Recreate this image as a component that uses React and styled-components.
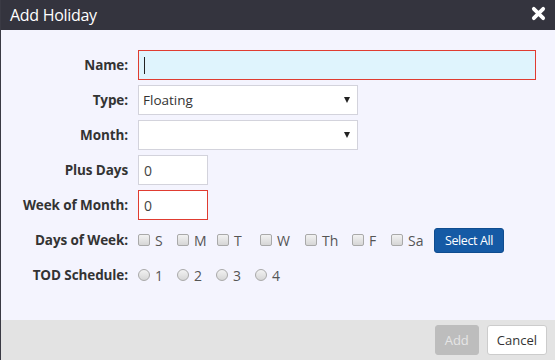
import React from 'react';
import styled, { createGlobalStyle } from 'styled-components';

const GlobalStyle = createGlobalStyle`
  html, body {
    margin: 0;
    padding: 0;
    background: #3a3a44;
  }
  body {
    font-family: "Open Sans", "Noto Sans", sans-serif;
    color: #333;
  }
`;

const days = [
  { label: 'S', width: 39 },
  { label: 'M', width: 40 },
  { label: 'T', width: 43 },
  { label: 'W', width: 45 },
  { label: 'Th', width: 47 },
  { label: 'F', width: 39 },
  { label: 'Sa', width: 43 },
];

const schedules = ['1', '2', '3', '4'];

const App = () => {
  return (
    <>
      <GlobalStyle />
      <Dialog>
        <Header>
          <Title>Add Holiday</Title>
          <CloseIcon viewBox="0 0 16 16">
            <path d="M3 3 L13 13 M13 3 L3 13" stroke="#fff" strokeWidth="4" strokeLinecap="round" />
          </CloseIcon>
        </Header>
        <Body>
          <Row>
            <Label>Name:</Label>
            <TextInput $width={398} $invalid $focused>
              <Caret />
            </TextInput>
          </Row>
          <Row>
            <Label>Type:</Label>
            <Select>
              <span>Floating</span>
              <Arrow />
            </Select>
          </Row>
          <Row>
            <Label>Month:</Label>
            <Select>
              <span />
              <Arrow />
            </Select>
          </Row>
          <Row>
            <Label>Plus Days</Label>
            <TextInput $width={70}>0</TextInput>
          </Row>
          <Row>
            <Label>Week of Month:</Label>
            <TextInput $width={70} $invalid>0</TextInput>
          </Row>
          <Row>
            <Label>Days of Week:</Label>
            <Options>
              {days.map((d) => (
                <Option key={d.label} $width={d.width}>
                  <Checkbox />
                  {d.label}
                </Option>
              ))}
              <PrimaryButton>Select All</PrimaryButton>
            </Options>
          </Row>
          <Row>
            <Label>TOD Schedule:</Label>
            <Options>
              {schedules.map((s) => (
                <Option key={s} $width={39}>
                  <Radio />
                  {s}
                </Option>
              ))}
            </Options>
          </Row>
        </Body>
        <Footer>
          <Button $disabled>Add</Button>
          <Button>Cancel</Button>
        </Footer>
      </Dialog>
    </>
  );
};

const Dialog = styled.div`
  margin-left: 1px;
  width: 554px;
  height: 360px;
  display: flex;
  flex-direction: column;
  background: #f4f4fe;
`;

const Header = styled.div`
  height: 30px;
  flex: none;
  display: flex;
  align-items: center;
  justify-content: space-between;
  padding: 0 9px 0 9px;
  background: #34343e;
`;

const Title = styled.div`
  color: #fff;
  font-family: "Open Sans", sans-serif;
  font-size: 16px;
  letter-spacing: -0.3px;
  margin-top: -1px;
`;

const CloseIcon = styled.svg`
  width: 15px;
  height: 15px;
  margin-top: -3px;
`;

const Body = styled.div`
  flex: 1;
  display: flex;
  flex-direction: column;
  gap: 5px;
  padding-top: 20px;
`;

const Row = styled.div`
  display: flex;
  align-items: center;
  height: 30px;
`;

const Label = styled.div`
  width: 127px;
  flex: none;
  box-sizing: border-box;
  text-align: right;
  margin-right: 10px;
  font-size: 13.5px;
  font-weight: 700;
  color: #333;
  letter-spacing: -0.1px;
  white-space: nowrap;
`;

const TextInput = styled.div`
  box-sizing: border-box;
  width: ${(p) => p.$width}px;
  height: 30px;
  display: flex;
  align-items: center;
  padding-left: 5px;
  font-size: 14px;
  color: #444;
  background: ${(p) => (p.$focused ? '#dff4fd' : '#fff')};
  border: 1px solid ${(p) => (p.$invalid ? '#e03c31' : '#d3d3dc')};
`;

const Caret = styled.span`
  display: block;
  width: 1px;
  height: 17px;
  background: #222;
`;

const Select = styled.div`
  box-sizing: border-box;
  width: 220px;
  height: 30px;
  display: flex;
  align-items: center;
  justify-content: space-between;
  padding: 0 7px 0 4px;
  font-size: 13.5px;
  color: #333;
  background: #fff;
  border: 1px solid #d3d3dc;
`;

const Arrow = styled.span`
  width: 0;
  height: 0;
  border-left: 3.5px solid transparent;
  border-right: 3.5px solid transparent;
  border-top: 6px solid #222;
`;

const Options = styled.div`
  display: flex;
  align-items: center;
  height: 30px;
`;

const Option = styled.div`
  width: ${(p) => p.$width}px;
  flex: none;
  display: flex;
  align-items: center;
  gap: 5px;
  font-size: 14px;
  color: #555;
`;

const Checkbox = styled.span`
  box-sizing: border-box;
  width: 12px;
  height: 12px;
  border: 1px solid #a9a9a9;
  border-radius: 2px;
  background: linear-gradient(#f2f2f2, #d6d6d6);
`;

const Radio = styled(Checkbox)`
  border-radius: 50%;
`;

const PrimaryButton = styled.div`
  box-sizing: border-box;
  height: 25px;
  width: 70px;
  display: flex;
  align-items: center;
  justify-content: center;
  font-size: 12.5px;
  color: #fff;
  background: #155aa5;
  border: 1px solid #0f4c8f;
  border-radius: 3px;
  letter-spacing: -0.4px;
`;

const Footer = styled.div`
  height: 40px;
  flex: none;
  display: flex;
  align-items: center;
  justify-content: flex-end;
  gap: 8px;
  padding-right: 8px;
  background: #e3e3e3;
`;

const Button = styled.div`
  box-sizing: border-box;
  height: 30px;
  padding: 0 9px;
  min-width: 44px;
  display: flex;
  align-items: center;
  justify-content: center;
  font-size: 13px;
  border-radius: 3px;
  color: ${(p) => (p.$disabled ? '#e6e6e6' : '#333')};
  background: ${(p) => (p.$disabled ? '#bdbdbd' : '#fff')};
  border: 1px solid ${(p) => (p.$disabled ? '#bdbdbd' : '#ccc')};
`;

export default App;
